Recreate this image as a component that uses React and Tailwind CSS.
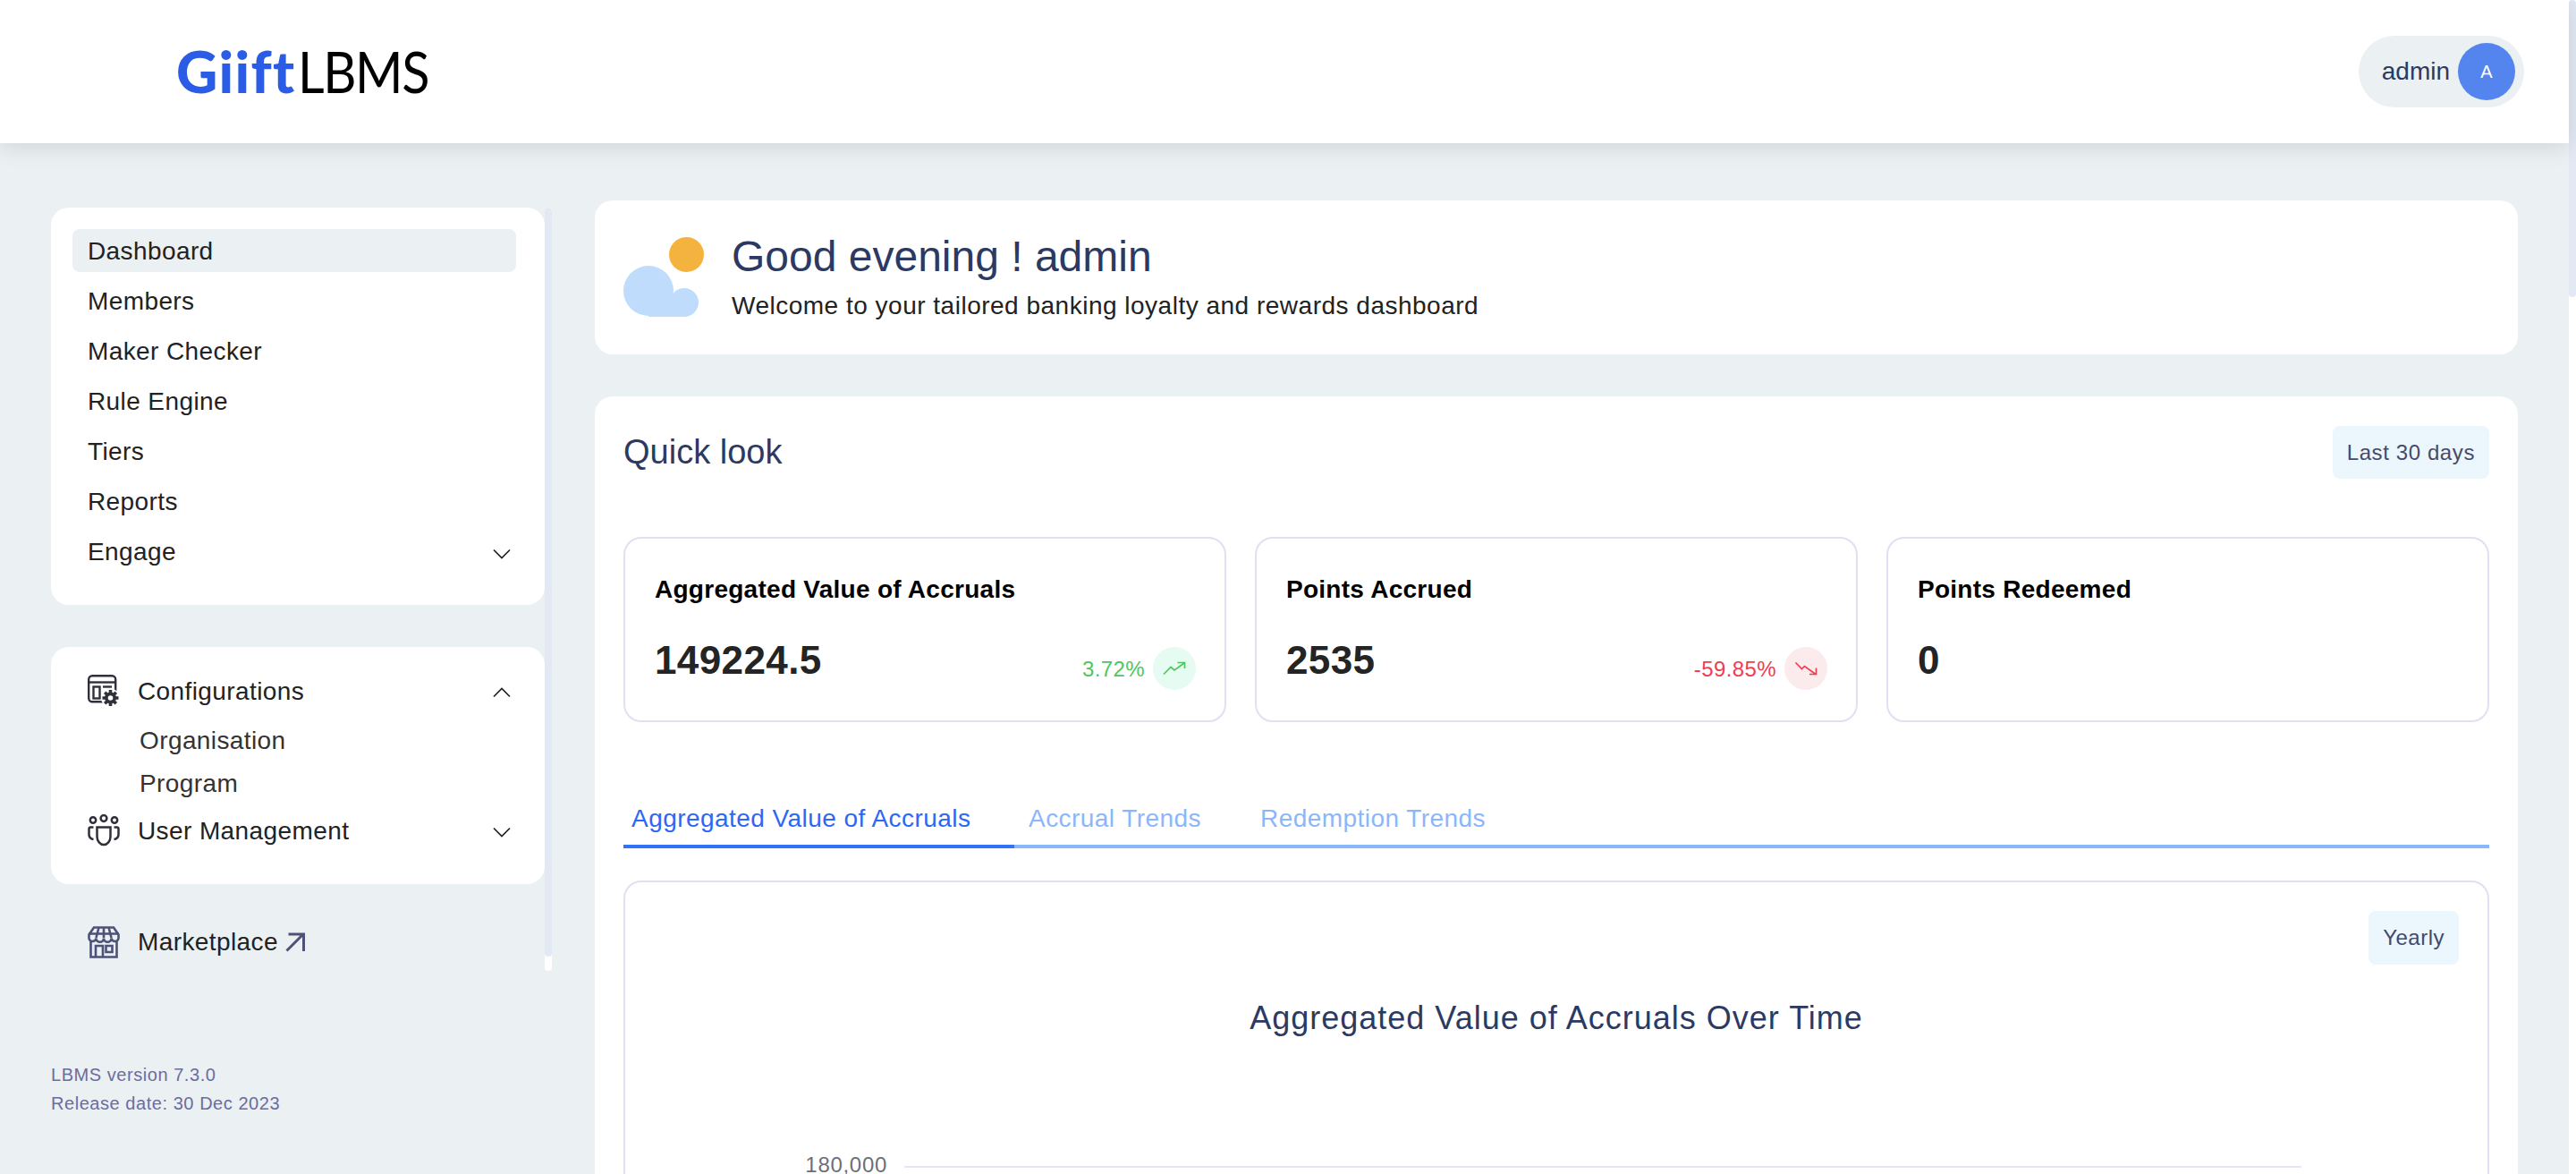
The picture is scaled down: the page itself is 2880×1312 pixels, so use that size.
const navItems = ["Dashboard", "Members", "Maker Checker", "Rule Engine", "Tiers", "Reports"];

const stats = [
  { title: "Aggregated Value of Accruals", value: "149224.5", change: "3.72%", up: true },
  { title: "Points Accrued", value: "2535", change: "-59.85%", up: false },
  { title: "Points Redeemed", value: "0" },
];

function Chevron({ up }) {
  return (
    <svg className="w-5 h-5 shrink-0 mt-[3px]" viewBox="0 0 20 20" fill="none" stroke="#222222" strokeWidth="1.7">
      <path d={up ? "M1 14.5 10 5.5l9 9" : "M1 5.5l9 9 9-9"} />
    </svg>
  );
}

function ConfigIcon() {
  return (
    <svg className="w-[36px] h-[36px] shrink-0" viewBox="0 0 36 36" fill="none" stroke="#30303c" strokeWidth="2.4">
      <rect x="1.2" y="1.2" width="30" height="29" rx="4" />
      <path d="M1.2 8.5h30" />
      <rect x="6.5" y="13.5" width="7" height="13" />
      <path d="M17 13.5h10" />
      <circle cx="25.5" cy="26" r="10.5" fill="#ffffff" stroke="none" />
      <path d="M25.5 17v18M16.5 26h18M19.2 19.7l12.6 12.6M31.8 19.7 19.2 32.3" strokeWidth="3.6" />
      <circle cx="25.5" cy="26" r="6.5" fill="#30303c" stroke="none" />
      <circle cx="25.5" cy="26" r="2.8" fill="#ffffff" stroke="none" />
    </svg>
  );
}

function UsersIcon() {
  return (
    <svg className="w-[36px] h-[36px] shrink-0" viewBox="0 0 36 36" fill="none" stroke="#30303c" strokeWidth="2.5">
      <circle cx="18" cy="4.5" r="3.4" />
      <circle cx="6" cy="6.5" r="3.2" />
      <circle cx="30" cy="6.5" r="3.2" />
      <path d="M10.5 14.5h15V25c0 5-3.5 9-7.5 9s-7.5-4-7.5-9z" />
      <path d="M6.5 14.5h-3a2 2 0 0 0-2 2v6c0 3 2 5 5 5.5" />
      <path d="M29.5 14.5h3a2 2 0 0 1 2 2v6c0 3-2 5-5 5.5" />
    </svg>
  );
}

function StoreIcon() {
  return (
    <svg className="w-[36px] h-[36px] shrink-0" viewBox="0 0 36 36" fill="none" stroke="#4e5278" strokeWidth="2.6">
      <path d="M7 1.5h22l5.5 8v3a4 4 0 0 1-8 1 4 4 0 0 1-8.500 0 4 4 0 0 1-8.500 0 4 4 0 0 1-8-1v-3z" />
      <path d="M1.5 8.5h33M12.5 1.5 9.5 13M23.5 1.5l3 11.5M18 1.5V13" />
      <path d="M3.5 16v18.5h29V16" />
      <path d="M9 34V22h8v12M20.5 22h7v7h-7z" />
    </svg>
  );
}

function TrendIcon({ up }) {
  if (up) {
    return (
      <svg className="w-[26px] h-[26px]" viewBox="0 0 26 26" fill="none" stroke="#4fc65f" strokeWidth="1.7">
        <path d="M1 19.5 9 11.5l4 3.5L24 7" />
        <path d="M16.5 6.5h8V13" />
      </svg>
    );
  }
  return (
    <svg className="w-[26px] h-[26px]" viewBox="0 0 26 26" fill="none" stroke="#ef3e50" strokeWidth="1.7">
      <path d="M1.5 6.5l7 7 3-3L24 19.5" />
      <path d="M24.5 12.5v7H17" />
    </svg>
  );
}

function WeatherIcon() {
  return (
    <svg className="w-[90px] h-[90px] shrink-0" viewBox="0 0 90 90">
      <circle cx="70.5" cy="19.5" r="19.5" fill="#f4b33e" />
      <circle cx="28" cy="60" r="28" fill="#bfdcfd" />
      <circle cx="68" cy="73" r="16" fill="#bfdcfd" />
      <rect x="28" y="65" width="40" height="24" fill="#bfdcfd" />
    </svg>
  );
}

function Sidebar() {
  return (
    <div className="w-[560px] shrink-0 flex flex-col pt-[72px]">
      <div className="flex">
        <div className="w-[552px] flex flex-col gap-[47px] tracking-[0.4px]">
          <div className="bg-white rounded-[20px] pt-6 pb-9 pl-6 pr-8 flex flex-col gap-2">
            {navItems.map((item, i) => (
              <div key={item} className={`h-12 rounded-lg flex items-center pl-[17px] pt-[2px] text-[28px] text-[#222222] ${i === 0 ? "bg-[#ebf0f3]" : ""}`}>
                {item}
              </div>
            ))}
            <div className="h-12 flex items-center justify-between pl-[17px] pr-[6px] pt-[2px] text-[28px] text-[#222222]">
              Engage
              <Chevron />
            </div>
          </div>

          <div className="bg-white rounded-[20px] h-[265px] pl-[41px] pr-[38px] pt-[24px] flex flex-col text-[28px] text-[#222222]">
            <div className="h-[50px] flex items-center justify-between">
              <div className="flex items-center gap-5">
                <ConfigIcon />
                <span className="pt-[2px]">Configurations</span>
              </div>
              <Chevron up />
            </div>
            <div className="pl-[58px] pt-[6px] flex flex-col text-[#333333]">
              <div className="h-12 flex items-center pt-[2px]">Organisation</div>
              <div className="h-12 flex items-center pt-[2px]">Program</div>
            </div>
            <div className="h-[50px] mt-1 flex items-center justify-between">
              <div className="flex items-center gap-5">
                <UsersIcon />
                <span className="pt-[1px]">User Management</span>
              </div>
              <Chevron />
            </div>
          </div>

          <div className="h-9 pl-[41px] flex items-center gap-5 text-[28px] text-[#222222]">
            <StoreIcon />
            <div className="flex items-center gap-[8px]">
              Marketplace
              <svg className="w-[22px] h-[22px]" viewBox="0 0 22 22" fill="none" stroke="#4e5278" strokeWidth="3">
                <path d="M1.5 20.5 20 2M3.5 2h17v19" />
              </svg>
            </div>
          </div>
        </div>
        <div className="w-2 h-[853px] bg-white rounded-full overflow-hidden">
          <div className="w-2 h-[837px] bg-[#e3e9f4] rounded-full" />
        </div>
      </div>
      <div className="pt-[100px] text-[20px] leading-8 tracking-[0.55px] text-[#6b6c9f]">
        <div>LBMS version 7.3.0</div>
        <div>Release date: 30 Dec 2023</div>
      </div>
    </div>
  );
}

function StatCard({ title, value, change, up }) {
  return (
    <div className="h-[207px] border-2 border-[#dfe0f2] rounded-[20px] pl-[33px] pr-[32px] pt-[41px]">
      <div className="text-[28px] leading-8 font-bold tracking-[0.27px] text-black">{title}</div>
      <div className="flex justify-between mt-[37px]">
        <div className="text-[44px] leading-[52px] font-bold tracking-[0.4px] text-[#242424]">{value}</div>
        {change && (
          <div className="flex items-center gap-[9px] mt-[11px]">
            <span className={`text-[24px] pt-[2px] tracking-[0.4px] ${up ? "text-[#4fc65f]" : "text-[#ef3e50]"}`}>{change}</span>
            <div className={`w-12 h-12 rounded-full flex items-center justify-center ${up ? "bg-[#e6fbf2]" : "bg-[#fcebec]"}`}>
              <TrendIcon up={up} />
            </div>
          </div>
        )}
      </div>
    </div>
  );
}

function MainPanel() {
  return (
    <div className="w-[2150px] ml-[48px] shrink-0 pt-16 flex flex-col gap-[47px]">
      <div className="h-[172px] bg-white rounded-[20px] pl-[32px] flex items-center gap-[31px]">
        <WeatherIcon />
        <div className="pb-[4px]">
          <div className="text-[48px] leading-[60px] text-[#2c3a63]">Good evening ! admin</div>
          <div className="text-[28px] leading-9 tracking-[0.5px] text-[#222222] mt-[7px]">Welcome to your tailored banking loyalty and rewards dashboard</div>
        </div>
      </div>

      <div className="bg-white rounded-t-[20px] px-8 pt-[33px] h-[869px]">
        <div className="flex items-center justify-between">
          <div className="text-[38px] text-[#2c3a63]">Quick look</div>
          <div className="h-[59px] px-4 rounded-lg bg-[#ebf6fd] flex items-center text-[24px] tracking-[0.6px] text-[#454a6b]">Last 30 days</div>
        </div>

        <div className="grid grid-cols-3 gap-8 mt-[65px]">
          {stats.map((s) => (
            <StatCard key={s.title} {...s} />
          ))}
        </div>

        <div className="mt-[84px] h-[57px] flex border-b-4 border-[#8cb6fb] text-[28px] tracking-[0.45px] text-[#8cb6fb]">
          <div className="w-[437px] -mb-1 pl-[9px] pb-[6px] h-[57px] border-b-4 border-[#3272fb] text-[#2a68f5] flex items-center">Aggregated Value of Accruals</div>
          <div className="ml-4 h-[53px] pb-[5px] flex items-center">Accrual Trends</div>
          <div className="ml-[66px] h-[53px] pb-[5px] flex items-center">Redemption Trends</div>
        </div>

        <div className="mt-9 border-2 border-[#dfe0f2] rounded-t-[20px] h-[400px] pt-8 pr-8">
          <div className="flex justify-end">
            <div className="h-[60px] px-4 rounded-lg bg-[#ebf6fd] flex items-center text-[24px] tracking-[0.5px] text-[#454a6b]">Yearly</div>
          </div>
          <div className="text-center text-[36px] leading-[44px] tracking-[1px] text-[#2c3a63] mt-[38px] ml-8">Aggregated Value of Accruals Over Time</div>
          <div className="flex items-center mt-[130px]">
            <div className="w-[293px] pb-1 text-right text-[24px] tracking-[0.7px] text-[#6e6e78] leading-6">180,000</div>
            <div className="ml-[19px] w-[1562px] h-[2px] bg-[#e3e6f0]" />
          </div>
        </div>
      </div>
    </div>
  );
}

export default function App() {
  return (
    <div className="w-[2880px] h-[1312px] overflow-hidden flex bg-white font-['Liberation_Sans',Arial,sans-serif]">
      <div className="w-[2872px] flex flex-col bg-[#ebf0f3]">
        <header className="h-[160px] shrink-0 bg-white shadow-[0_4px_24px_rgba(0,0,0,0.12)] relative flex items-center justify-between pl-[197px] pr-[50px]">
          <div className="flex items-baseline text-[64px] leading-none font-['Lato',sans-serif]">
            <span className="font-black tracking-[1.3px] text-[#2b5ce6]">Giift</span>
            <span className="ml-[3px] inline-block origin-left scale-x-90 font-normal tracking-[-1.5px] text-black">LBMS</span>
          </div>
          <div className="h-20 pl-[26px] pr-[10px] rounded-full bg-[#ebf0f3] flex items-center gap-[9px]">
            <span className="text-[28px] text-[#2c3a63]">admin</span>
            <div className="w-16 h-16 rounded-full bg-[#5484ee] flex items-center justify-center text-[20px] text-white">A</div>
          </div>
        </header>
        <div className="flex-1 flex pl-[57px] overflow-hidden">
          <Sidebar />
          <MainPanel />
        </div>
      </div>
      <div className="w-2 shrink-0">
        <div className="w-2 h-[332px] bg-[#e3e9f4] rounded-full" />
      </div>
    </div>
  );
}
